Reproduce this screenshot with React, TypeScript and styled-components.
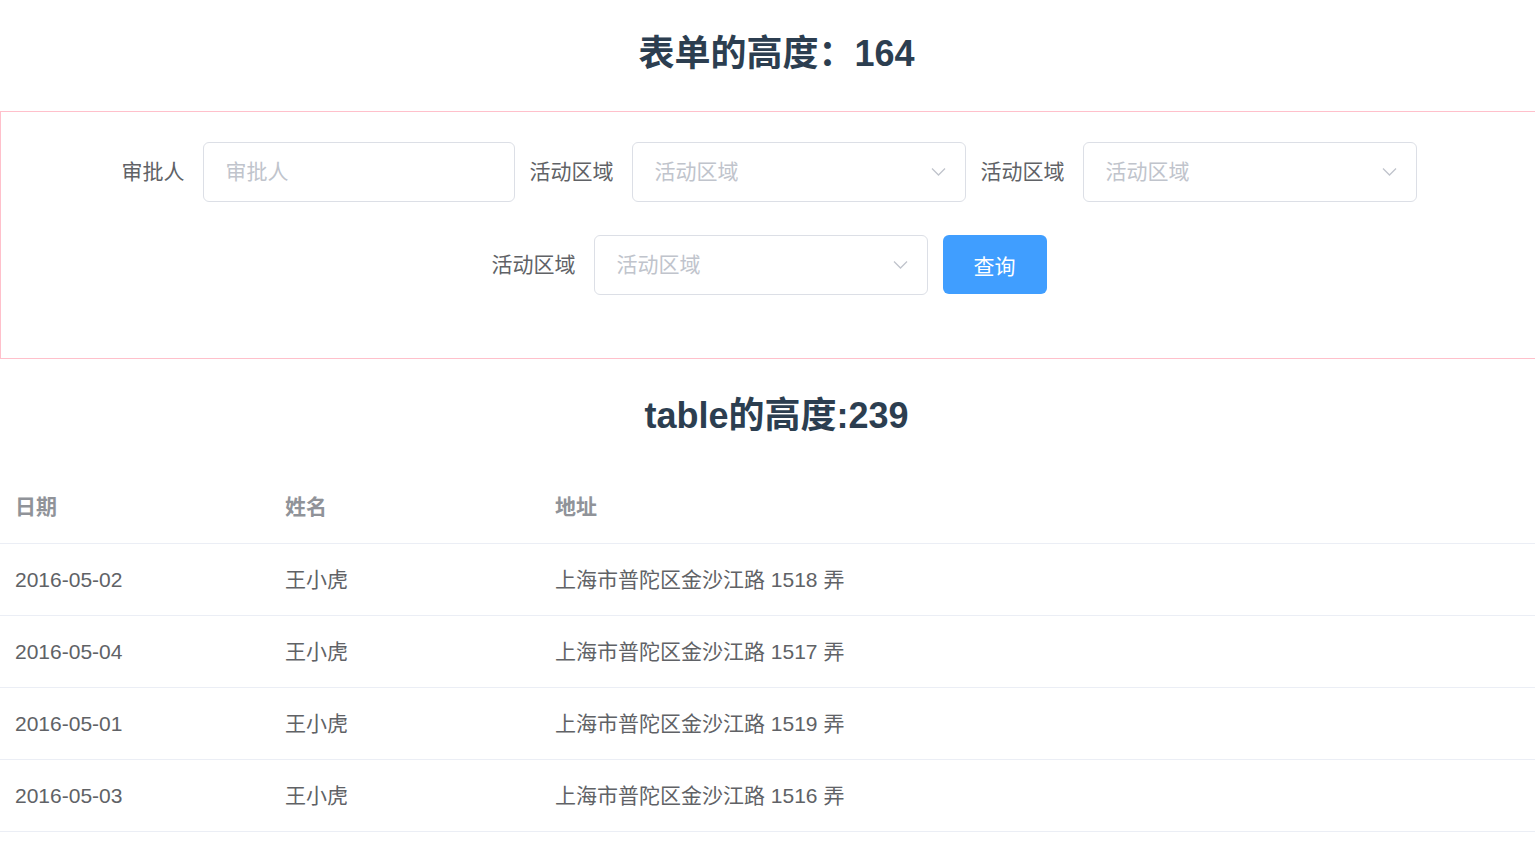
import styled, { createGlobalStyle } from 'styled-components';

const GlobalStyle = createGlobalStyle`
    html, body {
        margin: 0;
        padding: 0;
        background: #ffffff;
        overflow-x: hidden;
    }
    body {
        font-family: "Liberation Sans", "Noto Sans CJK SC", sans-serif;
        color: #2c3e50;
    }
    * {
        box-sizing: border-box;
    }
`;

const Page = styled.div`
    width: 100%;
`;

const Title = styled.h2<{ $top: number; $bottom: number }>`
    margin: ${(p) => p.$top}px 0 ${(p) => p.$bottom}px;
    padding-left: 18px;
    font-size: 36px;
    line-height: 54px;
    font-weight: 700;
    text-align: center;
    color: #2c3e50;
`;

const FormBox = styled.div`
    width: 100%;
    border: 1px solid #ffc0cb;
    border-right-width: 0;
    padding: 30px 29px 30px 31px;
`;

const FormRow = styled.div`
    display: flex;
    flex-wrap: wrap;
    justify-content: center;
    column-gap: 15px;
`;

const FormItem = styled.div`
    display: flex;
    align-items: flex-start;
    margin-bottom: 33px;
`;

const Label = styled.label`
    padding-right: 18px;
    font-size: 21px;
    line-height: 60px;
    color: #606266;
    white-space: nowrap;
`;

const Field = styled.div<{ $width: number }>`
    position: relative;
    width: ${(p) => p.$width}px;
    height: 60px;
    border: 1px solid #dcdfe6;
    border-radius: 6px;
    background: #fff;
    display: flex;
    align-items: center;
    padding: 0 45px 0 22px;
`;

const Input = styled.input`
    width: 100%;
    border: none;
    outline: none;
    padding: 0;
    background: transparent;
    font-family: inherit;
    font-size: 21px;
    color: #606266;
    &::placeholder {
        color: #c0c4cc;
    }
`;

const Arrow = styled.span`
    position: absolute;
    right: 19px;
    top: 50%;
    transform: translateY(-50%);
    display: flex;
`;

const Button = styled.button`
    width: 104px;
    height: 59px;
    border: none;
    border-radius: 6px;
    background: #409eff;
    color: #fff;
    font-family: inherit;
    font-size: 21px;
    cursor: pointer;
`;

const Table = styled.table`
    width: 100%;
    border-collapse: collapse;
    table-layout: fixed;
`;

const Th = styled.th<{ $width?: number }>`
    width: ${(p) => (p.$width ? `${p.$width}px` : 'auto')};
    padding: 18px 15px;
    text-align: left;
    font-size: 21px;
    line-height: 34.5px;
    font-weight: 700;
    color: #909399;
    border-bottom: 1px solid #ebeef5;
`;

const Td = styled.td`
    padding: 18px 15px;
    font-size: 21px;
    line-height: 35px;
    color: #606266;
    border-bottom: 1px solid #ebeef5;
    white-space: nowrap;
`;

function Chevron() {
    return (
        <svg width="15" height="9" viewBox="0 0 15 9" fill="none">
            <path d="M1 1 L7.5 7.5 L14 1" stroke="#c0c4cc" strokeWidth="1.3" />
        </svg>
    );
}

function SelectField({ placeholder }: { placeholder: string }) {
    return (
        <Field $width={334}>
            <Input placeholder={placeholder} readOnly />
            <Arrow>
                <Chevron />
            </Arrow>
        </Field>
    );
}

const rows = [
    { date: '2016-05-02', name: '王小虎', address: '上海市普陀区金沙江路 1518 弄' },
    { date: '2016-05-04', name: '王小虎', address: '上海市普陀区金沙江路 1517 弄' },
    { date: '2016-05-01', name: '王小虎', address: '上海市普陀区金沙江路 1519 弄' },
    { date: '2016-05-03', name: '王小虎', address: '上海市普陀区金沙江路 1516 弄' },
];

function App() {
    return (
        <Page>
            <GlobalStyle />
            <Title $top={27} $bottom={30}>表单的高度：164</Title>
            <FormBox>
                <FormRow>
                    <FormItem>
                        <Label>审批人</Label>
                        <Field $width={312}>
                            <Input placeholder="审批人" />
                        </Field>
                    </FormItem>
                    <FormItem>
                        <Label>活动区域</Label>
                        <SelectField placeholder="活动区域" />
                    </FormItem>
                    <FormItem>
                        <Label>活动区域</Label>
                        <SelectField placeholder="活动区域" />
                    </FormItem>
                    <FormItem>
                        <Label>活动区域</Label>
                        <SelectField placeholder="活动区域" />
                    </FormItem>
                    <FormItem>
                        <Button>查询</Button>
                    </FormItem>
                </FormRow>
            </FormBox>
            <Title $top={30} $bottom={29}>table的高度:239</Title>
            <Table>
                <thead>
                    <tr>
                        <Th $width={270}>日期</Th>
                        <Th $width={270}>姓名</Th>
                        <Th>地址</Th>
                    </tr>
                </thead>
                <tbody>
                    {rows.map((row) => (
                        <tr key={row.date}>
                            <Td>{row.date}</Td>
                            <Td>{row.name}</Td>
                            <Td>{row.address}</Td>
                        </tr>
                    ))}
                </tbody>
            </Table>
        </Page>
    );
}

export default App;
